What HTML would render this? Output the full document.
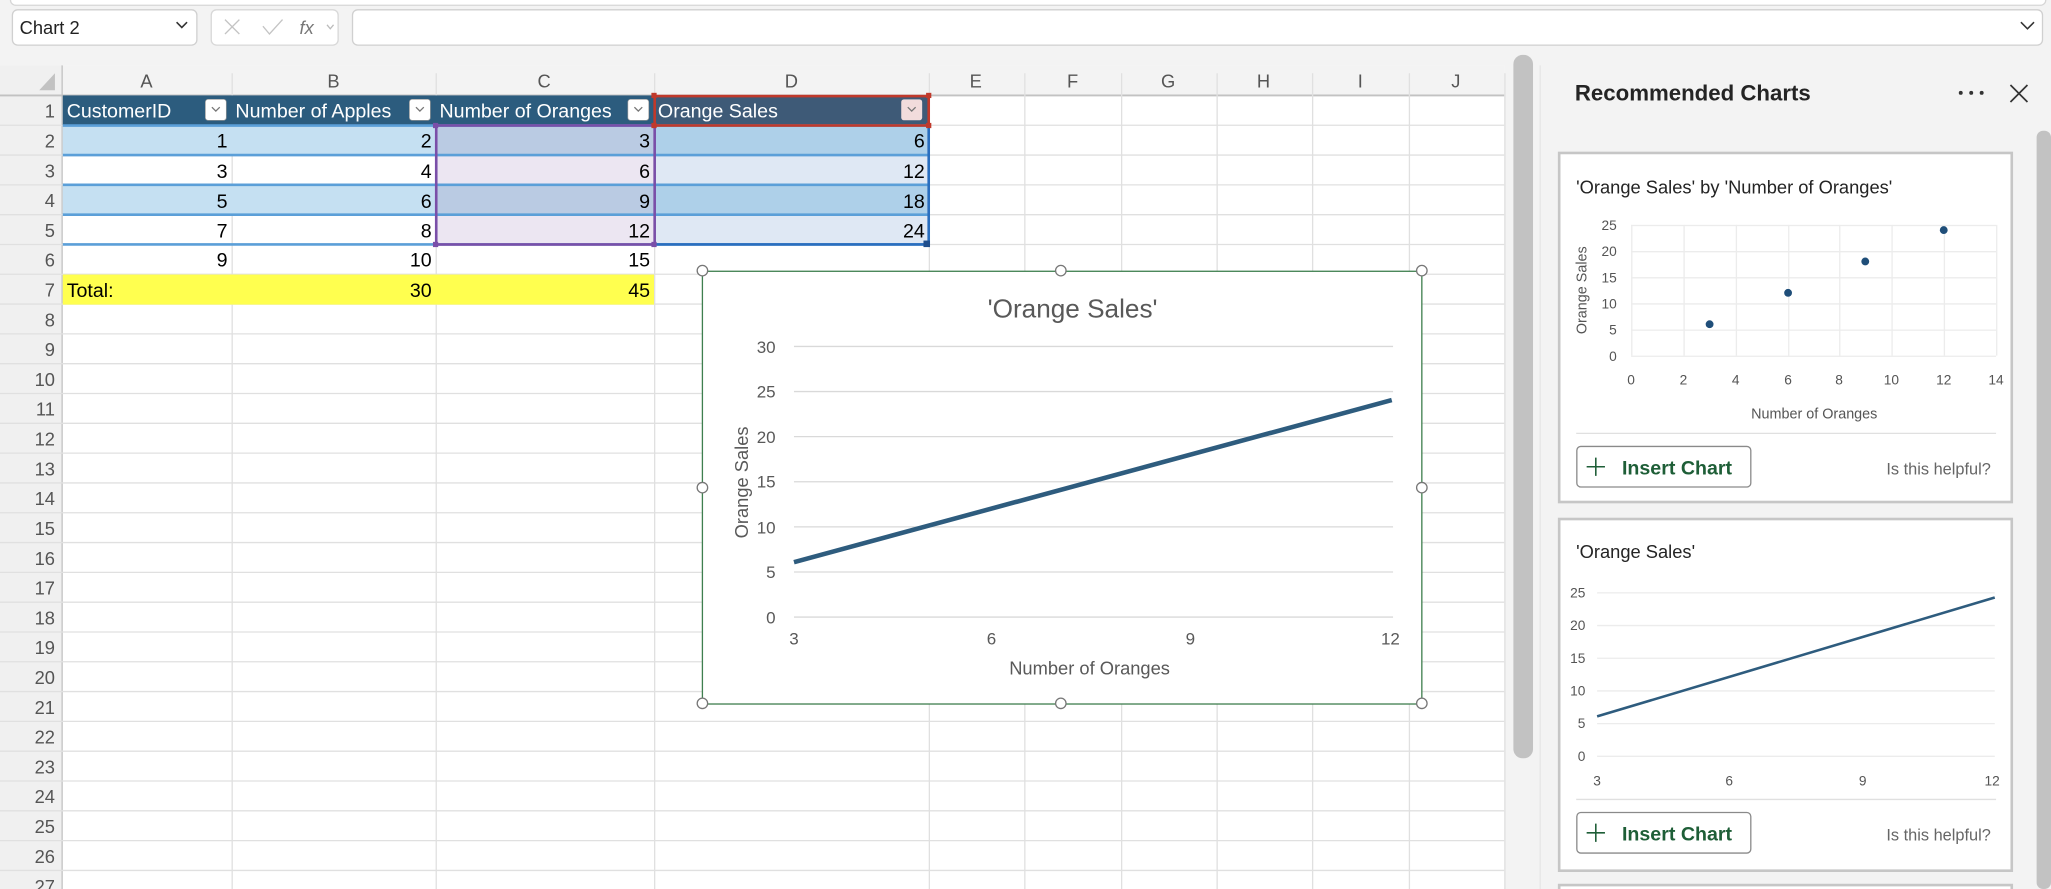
<!DOCTYPE html>
<html><head><meta charset="utf-8"><style>
html,body{margin:0;padding:0;background:#f3f3f3;overflow:hidden}
svg{display:block}
text{font-family:"Liberation Sans Narrow","Liberation Sans",sans-serif}
.s{font-family:"Liberation Sans","DejaVu Sans",sans-serif}
</style></head><body>
<svg width="2051" height="889" viewBox="0 0 1568 680" preserveAspectRatio="none" xmlns="http://www.w3.org/2000/svg">
<rect width="1568" height="680" fill="#f3f3f3"/>
<rect x="8" y="-6" width="1556" height="10" rx="4" fill="#fff" stroke="#d6d6d6"/>
<rect x="9.5" y="7.5" width="141" height="27" rx="4" fill="#fff" stroke="#d0d0d0"/>
<text x="15" y="26" font-size="14" fill="#222" class="s">Chart 2</text>
<path d="M135 17 l4 4 l4 -4" stroke="#333" fill="none" stroke-width="1.2"/>
<rect x="161.5" y="7.5" width="97" height="27" rx="4" fill="#fff" stroke="#d8d8d8"/>
<path d="M172 15 l11 11 M183 15 l-11 11" stroke="#c4c4c4" stroke-width="1"/>
<path d="M201 20 l5 6 l10 -11" stroke="#c4c4c4" fill="none" stroke-width="1"/>
<text x="229" y="26" font-size="14" font-style="italic" fill="#777" font-family="Liberation Serif,serif">fx</text>
<path d="M250 19 l2.5 3 l2.5 -3" stroke="#bbb" fill="none"/>
<rect x="269.5" y="7.5" width="1292" height="27" rx="4" fill="#fff" stroke="#d0d0d0"/>
<path d="M1545 17 l5 5 l5 -5" stroke="#333" fill="none" stroke-width="1.2"/>

<rect x="0" y="50" width="1150" height="630" fill="#fff"/>
<rect x="0" y="50" width="1150" height="23" fill="#f3f3f3"/>
<rect x="0" y="50" width="47" height="630" fill="#f0f0f0"/>
<line x1="47.5" y1="50" x2="47.5" y2="680" stroke="#c2c2c2"/>
<line x1="0" y1="73" x2="1150" y2="73" stroke="#c2c2c2" stroke-width="1.5"/>
<path d="M42 56 L42 69 L30 69 Z" fill="#c2c2c2"/>
<g stroke="#e0e0e0" stroke-width="1">
<path d="M177.5 56V680M333.5 56V680M500.5 56V680M710.5 56V680M783.5 56V680M857.5 56V680M930.5 56V680M1003.5 56V680M1077.5 56V680M1150.5 56V680"/>
<path d="M0 95.8H1150M0 118.6H1150M0 141.4H1150M0 164.2H1150M0 187H1150M0 209.8H1150M0 232.6H1150M0 255.4H1150M0 278.2H1150M0 301H1150M0 323.8H1150M0 346.6H1150M0 369.4H1150M0 392.2H1150M0 415H1150M0 437.8H1150M0 460.6H1150M0 483.4H1150M0 506.2H1150M0 529H1150M0 551.8H1150M0 574.6H1150M0 597.4H1150M0 620.2H1150M0 643H1150M0 665.8H1150"/>
</g>
<g font-size="14" fill="#555" text-anchor="middle">
<text x="112" y="67">A</text><text x="255" y="67">B</text><text x="416" y="67">C</text><text x="605" y="67">D</text><text x="746" y="67">E</text><text x="820" y="67">F</text><text x="893" y="67">G</text><text x="966" y="67">H</text><text x="1040" y="67">I</text><text x="1113" y="67">J</text>
</g>
<g font-size="14" fill="#555" text-anchor="end" class="s">
<text x="42" y="90">1</text><text x="42" y="113">2</text><text x="42" y="135.6">3</text><text x="42" y="158.4">4</text><text x="42" y="181.2">5</text><text x="42" y="204">6</text><text x="42" y="226.8">7</text><text x="42" y="249.6">8</text><text x="42" y="272.4">9</text><text x="42" y="295.2">10</text><text x="42" y="318">11</text><text x="42" y="340.8">12</text><text x="42" y="363.6">13</text><text x="42" y="386.4">14</text><text x="42" y="409.2">15</text><text x="42" y="432">16</text><text x="42" y="454.8">17</text><text x="42" y="477.6">18</text><text x="42" y="500.4">19</text><text x="42" y="523.2">20</text><text x="42" y="546">21</text><text x="42" y="568.8">22</text><text x="42" y="591.6">23</text><text x="42" y="614.4">24</text><text x="42" y="637.2">25</text><text x="42" y="660">26</text><text x="42" y="683">27</text>
</g>
<rect x="48" y="73" width="452" height="23" fill="#2c5c7e"/>
<rect x="500" y="73" width="210" height="23" fill="#3e5a77"/>
<rect x="48" y="96" width="285" height="22.6" fill="#c5e0f2"/>
<rect x="48" y="141.4" width="285" height="22.8" fill="#c5e0f2"/>
<rect x="333" y="96" width="167" height="22.6" fill="#bacbe3"/>
<rect x="333" y="118.6" width="167" height="22.8" fill="#ece6f2"/>
<rect x="333" y="141.4" width="167" height="22.8" fill="#bacbe3"/>
<rect x="333" y="164.2" width="167" height="22.8" fill="#ece6f2"/>
<rect x="500" y="96" width="210" height="22.6" fill="#aed0e9"/>
<rect x="500" y="118.6" width="210" height="22.8" fill="#dfe8f4"/>
<rect x="500" y="141.4" width="210" height="22.8" fill="#aed0e9"/>
<rect x="500" y="164.2" width="210" height="22.8" fill="#dfe8f4"/>
<g stroke="#5b9fd8" stroke-width="2">
<path d="M48 96H710M48 118.6H710M48 141.4H710M48 164.2H710M48 187H710"/>
</g>
<rect x="48" y="210" width="452" height="23" fill="#ffff4f"/>
<rect x="333.5" y="96" width="167" height="91" fill="none" stroke="#7a4fa8" stroke-width="2"/>
<rect x="500.5" y="73.5" width="209.5" height="22.5" fill="none" stroke="#c0392b" stroke-width="2"/>
<path d="M710 96V187H500" stroke="#2a6ebe" stroke-width="2" fill="none"/>
<g fill="#7a4fa8"><rect x="331" y="94" width="4" height="4"/><rect x="331" y="185" width="4" height="4"/><rect x="498" y="185" width="4" height="4"/></g>
<g fill="#c0392b"><rect x="498" y="71" width="4" height="4"/><rect x="708" y="71" width="4" height="4"/><rect x="498" y="94" width="4" height="4"/><rect x="708" y="94" width="4" height="4"/></g>
<rect x="706" y="184" width="5" height="5" fill="#1f4e8c"/>
<g font-size="15" fill="#fff">
<text x="51" y="90">CustomerID</text><text x="180" y="90">Number of Apples</text><text x="336" y="90">Number of Oranges</text><text x="503" y="90">Orange Sales</text>
</g>
<g fill="#fff" stroke="#999" stroke-width="0.5">
<rect x="157" y="76" width="16" height="16" rx="2"/><rect x="313" y="76" width="16" height="16" rx="2"/><rect x="480" y="76" width="16" height="16" rx="2"/>
</g>
<rect x="689" y="76" width="16" height="16" rx="2" fill="#f2dcdc"/>
<g stroke="#777" fill="none"><path d="M162 82l3 3l3-3M318 82l3 3l3-3M485 82l3 3l3-3M694 82l3 3l3-3"/></g>
<g font-size="15" fill="#000" text-anchor="end">
<text x="174" y="113">1</text><text x="330" y="113">2</text><text x="497" y="113">3</text><text x="707" y="113">6</text>
<text x="174" y="136">3</text><text x="330" y="136">4</text><text x="497" y="136">6</text><text x="707" y="136">12</text>
<text x="174" y="159">5</text><text x="330" y="159">6</text><text x="497" y="159">9</text><text x="707" y="159">18</text>
<text x="174" y="181.5">7</text><text x="330" y="181.5">8</text><text x="497" y="181.5">12</text><text x="707" y="181.5">24</text>
<text x="174" y="204">9</text><text x="330" y="204">10</text><text x="497" y="204">15</text>
<text x="330" y="227">30</text><text x="497" y="227">45</text>
</g>
<text x="51" y="227" font-size="15">Total:</text>

<rect x="537" y="207.5" width="550" height="331" fill="#fff" stroke="#3f7f4f" stroke-width="1"/>
<text x="820" y="243" font-size="20" fill="#595959" text-anchor="middle">'Orange Sales'</text>
<g stroke="#d9d9d9" stroke-width="1"><path d="M607 265H1065M607 299.5H1065M607 334H1065M607 368.5H1065M607 403H1065M607 437.5H1065M607 472H1065"/></g>
<g font-size="13" fill="#595959" text-anchor="end">
<text x="593" y="270">30</text><text x="593" y="304">25</text><text x="593" y="339">20</text><text x="593" y="373">15</text><text x="593" y="408">10</text><text x="593" y="442">5</text><text x="593" y="477">0</text>
</g>
<g font-size="13" fill="#595959" text-anchor="middle">
<text x="607" y="493">3</text><text x="758" y="493">6</text><text x="910" y="493">9</text><text x="1063" y="493">12</text>
</g>
<text x="833" y="516" font-size="14" fill="#595959" text-anchor="middle">Number of Oranges</text>
<text transform="translate(572,369) rotate(-90)" font-size="14" fill="#595959" text-anchor="middle" class="s">Orange Sales</text>
<line x1="607" y1="430" x2="1064" y2="306" stroke="#2e5c7e" stroke-width="3.5"/>
<g fill="#fff" stroke="#777" stroke-width="1">
<circle cx="537" cy="207" r="4"/><circle cx="811" cy="207" r="4"/><circle cx="1087" cy="207" r="4"/>
<circle cx="537" cy="373" r="4"/><circle cx="1087" cy="373" r="4"/>
<circle cx="537" cy="538" r="4"/><circle cx="811" cy="538" r="4"/><circle cx="1087" cy="538" r="4"/>
</g>

<rect x="1157" y="42" width="15" height="538" rx="7" fill="#c2c2c2"/>
<line x1="1177.5" y1="50" x2="1177.5" y2="680" stroke="#e6e6e6"/>

<text x="1204" y="77" font-size="17" font-weight="bold" fill="#242424" class="s">Recommended Charts</text>
<g fill="#333"><circle cx="1499" cy="71" r="1.5"/><circle cx="1507" cy="71" r="1.5"/><circle cx="1515" cy="71" r="1.5"/></g>
<path d="M1537 65l13 13M1550 65l-13 13" stroke="#333" stroke-width="1.3"/>
<rect x="1557" y="100" width="11" height="580" rx="5" fill="#c2c2c2"/>

<!-- card 1 -->
<rect x="1192" y="117" width="346" height="267" fill="#fff" stroke="#c6c6c6" stroke-width="2"/>
<text x="1205" y="148" font-size="14" fill="#242424" class="s">'Orange Sales' by 'Number of Oranges'</text>
<g stroke="#ececec"><path d="M1247 172.5H1526M1247 192.5H1526M1247 212.5H1526M1247 232.5H1526M1247 252.5H1526M1247 272.5H1526"/><path d="M1247.5 172V272M1287.5 172V272M1327.5 172V272M1367.5 172V272M1406.5 172V272M1446.5 172V272M1486.5 172V272M1526.5 172V272"/></g>
<g font-size="10.5" fill="#555" text-anchor="end" class="s">
<text x="1236" y="176">25</text><text x="1236" y="196">20</text><text x="1236" y="216">15</text><text x="1236" y="236">10</text><text x="1236" y="256">5</text><text x="1236" y="276">0</text>
</g>
<g font-size="10.5" fill="#555" text-anchor="middle" class="s">
<text x="1247" y="294">0</text><text x="1287" y="294">2</text><text x="1327" y="294">4</text><text x="1367" y="294">6</text><text x="1406" y="294">8</text><text x="1446" y="294">10</text><text x="1486" y="294">12</text><text x="1526" y="294">14</text>
</g>
<text transform="translate(1213,222) rotate(-90)" font-size="11" fill="#555" text-anchor="middle" class="s">Orange Sales</text>
<text x="1387" y="320" font-size="11" fill="#555" text-anchor="middle" class="s">Number of Oranges</text>
<g fill="#1f4e79"><circle cx="1307" cy="248" r="3"/><circle cx="1367" cy="224" r="3"/><circle cx="1426" cy="200" r="3"/><circle cx="1486" cy="176" r="3"/></g>
<line x1="1205" y1="331.5" x2="1526" y2="331.5" stroke="#e0e0e0"/>
<rect x="1205.5" y="341.5" width="133" height="31" rx="3" fill="#fff" stroke="#8a8a8a"/>
<path d="M1213 357h14M1220 350v14" stroke="#1e5e37" stroke-width="1.2"/>
<text x="1240" y="363" font-size="15" font-weight="bold" fill="#1e5e37" class="s">Insert Chart</text>
<text x="1522" y="363" font-size="12.5" fill="#666" text-anchor="end" class="s">Is this helpful?</text>

<!-- card 2 -->
<rect x="1192" y="397" width="346" height="269" fill="#fff" stroke="#c6c6c6" stroke-width="2"/>
<text x="1205" y="427" font-size="14" fill="#242424" class="s">'Orange Sales'</text>
<g stroke="#ececec"><path d="M1221 453.5H1525M1221 478.5H1525M1221 503.5H1525M1221 528.5H1525M1221 553.5H1525M1221 578.5H1525"/></g>
<g font-size="10.5" fill="#555" text-anchor="end" class="s">
<text x="1212" y="457">25</text><text x="1212" y="482">20</text><text x="1212" y="507">15</text><text x="1212" y="532">10</text><text x="1212" y="557">5</text><text x="1212" y="582">0</text>
</g>
<g font-size="10.5" fill="#555" text-anchor="middle" class="s">
<text x="1221" y="601">3</text><text x="1322" y="601">6</text><text x="1424" y="601">9</text><text x="1523" y="601">12</text>
</g>
<line x1="1221" y1="548" x2="1525" y2="457" stroke="#2e5c7e" stroke-width="2"/>
<line x1="1205" y1="611.5" x2="1526" y2="611.5" stroke="#e0e0e0"/>
<rect x="1205.5" y="621.5" width="133" height="31" rx="3" fill="#fff" stroke="#8a8a8a"/>
<path d="M1213 637h14M1220 630v14" stroke="#1e5e37" stroke-width="1.2"/>
<text x="1240" y="643" font-size="15" font-weight="bold" fill="#1e5e37" class="s">Insert Chart</text>
<text x="1522" y="643" font-size="12.5" fill="#666" text-anchor="end" class="s">Is this helpful?</text>

<rect x="1192" y="677" width="346" height="20" fill="#fff" stroke="#c6c6c6" stroke-width="2"/>
</svg>
</body></html>
